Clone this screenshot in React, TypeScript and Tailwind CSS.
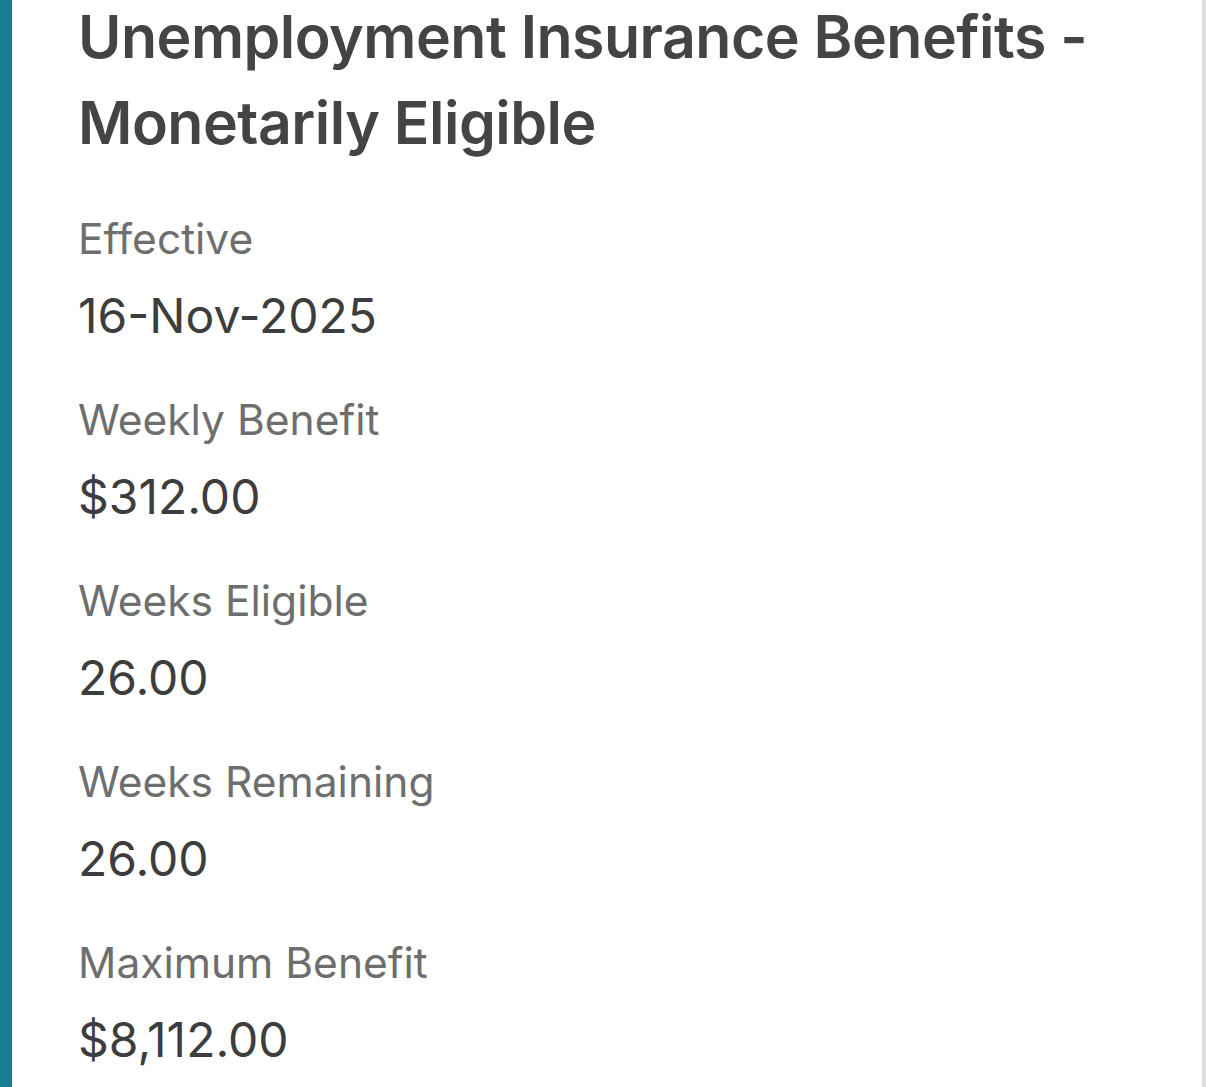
import React from "react";

const items = [
  { label: "Effective", value: "16-Nov-2025" },
  { label: "Weekly Benefit", value: "$312.00" },
  { label: "Weeks Eligible", value: "26.00" },
  { label: "Weeks Remaining", value: "26.00" },
  { label: "Maximum Benefit", value: "$8,112.00" },
];

export default function App() {
  return (
    <div
      className="flex h-[1087px] w-[1206px] overflow-hidden bg-white"
      style={{ fontFamily: "Inter, 'Noto Sans', Roboto, sans-serif" }}
    >
      <div className="w-[12px] shrink-0 bg-[#167f93]" />
      <div className="flex-1 border-r-4 border-[#dcdcdc] pl-[66px] pr-4">
        <h1 className="-mt-[6px] text-[59px] font-semibold leading-[86px] tracking-[-0.5px] text-[#444444]">
          Unemployment Insurance Benefits - Monetarily Eligible
        </h1>
        <div className="mt-[45px] flex flex-col gap-[46px]">
          {items.map((it) => (
            <div key={it.label} className="flex flex-col gap-[19px]">
              <div className="text-[42.5px] leading-[56px] text-[#6e6e6e]">{it.label}</div>
              <div className="text-[48px] leading-[60px] text-[#3d3d3d]">{it.value}</div>
            </div>
          ))}
        </div>
      </div>
    </div>
  );
}
